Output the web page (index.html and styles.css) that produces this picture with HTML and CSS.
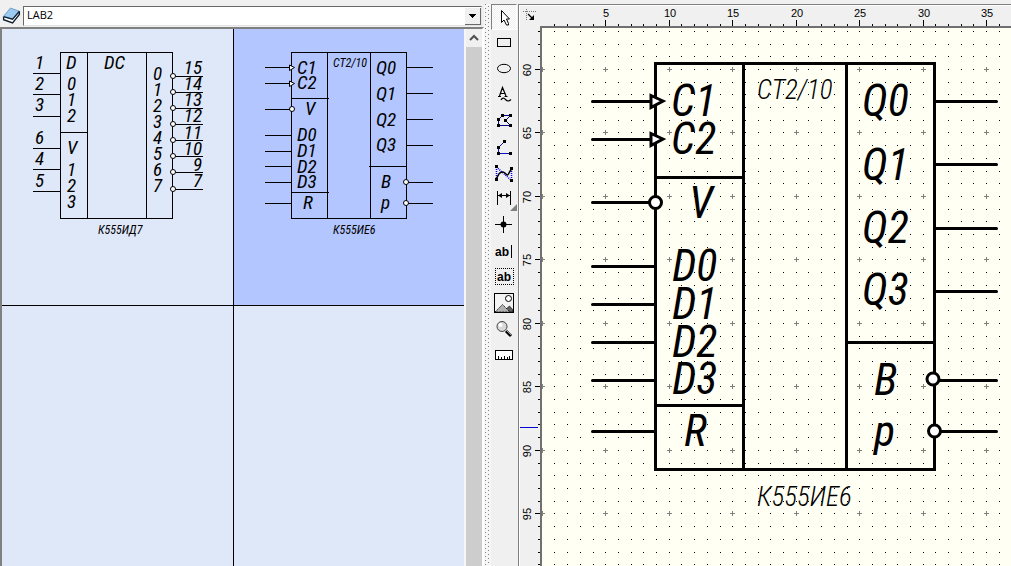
FILE: index.html
```html
<!DOCTYPE html>
<html lang="ru">
<head>
<meta charset="utf-8">
<title>LAB2</title>
<link rel="stylesheet" href="styles.css">
</head>
<body>
<div class="app">
  <div class="dock-edge"></div>
  <div class="workspace">
    <aside class="library">
      <div class="library-bar">
        <svg class="book" viewBox="0 0 18 18" aria-hidden="true">
          <path d="M1 10L8 2L16 5V8L10 16L2 13Z" fill="#fff" stroke="#8f9fae" stroke-width=".6"/>
          <path d="M1.500 10L8 2L16.500 5L10 12.500Z" fill="#9ccaf2" stroke="#6f9fc8" stroke-width=".8"/>
          <path d="M1.500 10L10 12.500L16.500 5M1.500 10.500V13L10 16L16.500 8V5" fill="none" stroke="#10202e" stroke-width="1.200"/>
        </svg>
        <select class="library-select" aria-label="Библиотека"><option>LAB2</option></select>
      </div>
      <div class="catalog">
        <div class="cells">
          <div class="cell">
            <svg class="part" viewBox="2 29 231 276" role="img" aria-label="К555ИД7">
              <path class="thin" d="M60.500 52.500H172.500V218.500H60.500ZM87.500 52V218M146.500 52V218M60 132.500H87M33 73.500H60M33 94.500H60M33 116.500H60M33 148.500H60M33 169.500H60M33 191.500H60M173 76.500H203M173 92.500H203M173 108.500H203M173 124.500H203M173 140.500H203M173 156.500H203M173 172.500H203M173 189.500H203"/>
              <g class="pin-thin"><circle cx="173" cy="76" r="2.500"/><circle cx="173" cy="92" r="2.500"/><circle cx="173" cy="108" r="2.500"/><circle cx="173" cy="124" r="2.500"/><circle cx="173" cy="140" r="2.500"/><circle cx="173" cy="156" r="2.500"/><circle cx="173" cy="172" r="2.500"/><circle cx="173" cy="189" r="2.500"/></g>
              <g class="label">
                <text x="35" y="69">1</text><text x="35" y="90">2</text><text x="35" y="111">3</text><text x="35" y="144">6</text><text x="35" y="165">4</text><text x="35" y="187">5</text>
                <text x="66" y="69">D</text><text x="67" y="90">0</text><text x="67" y="106">1</text><text x="67" y="122">2</text><text x="67" y="154">V</text><text x="67" y="176">1</text><text x="67" y="192">2</text><text x="67" y="208">3</text>
                <text x="104" y="69">DC</text>
                <text x="153" y="80">0</text><text x="153" y="96">1</text><text x="153" y="112">2</text><text x="153" y="128">3</text><text x="153" y="144">4</text><text x="153" y="160">5</text><text x="153" y="176">6</text><text x="153" y="192">7</text>
                <g text-anchor="end"><text x="202" y="74">15</text><text x="202" y="90">14</text><text x="202" y="106">13</text><text x="202" y="122">12</text><text x="202" y="139">11</text><text x="202" y="155">10</text><text x="202" y="171">9</text><text x="202" y="187">7</text></g>
              </g>
              <text class="caption" x="98" y="234">К555ИД7</text>
            </svg>
          </div>
          <div class="cell selected">
            <svg class="part" viewBox="234 29 231 276" role="img" aria-label="К555ИЕ6">
              <path class="thin" d="M291.500 52.500H406.500V218.500H291.500ZM327.500 52V218M370.500 52V218M291 98.500H329M291 192.500H329M369 166.500H406M265 67.500H291M265 83.500H291M265 109.500H291M265 135.500H291M265 151.500H291M265 166.500H291M265 182.500H291M265 203.500H291M407 67.500H433M407 93.500H433M407 119.500H433M407 145.500H433M407 182.500H433M407 203.500H433"/>
              <g class="pin-thin"><path d="M289.500 65L294.500 67.500L289.500 70.500ZM289.500 81L294.500 83.500L289.500 86.500Z"/><circle cx="292" cy="109" r="2.500"/><circle cx="406" cy="182" r="2.500"/><circle cx="406" cy="203" r="2.500"/></g>
              <g class="label">
                <text x="297" y="74">C1</text><text x="297" y="89">C2</text><text x="305" y="115">V</text><text x="297" y="141">D0</text><text x="297" y="157">D1</text><text x="297" y="173">D2</text><text x="297" y="188">D3</text><text x="303" y="209">R</text>
                <text x="376" y="74">Q0</text><text x="376" y="100">Q1</text><text x="376" y="126">Q2</text><text x="376" y="151">Q3</text><text x="381" y="188">B</text><text x="381" y="209">p</text>
              </g>
              <text class="caption" x="333" y="67">CT2/10</text>
              <text class="caption" x="333" y="234">К555ИЕ6</text>
            </svg>
          </div>
          <div class="cell"></div>
          <div class="cell"></div>
        </div>
        <div class="scrollbar">
          <button class="scroll-up" aria-label="Вверх"><svg viewBox="0 0 16 18"><path d="M4 11l4-4 4 4" fill="none" stroke="#505050" stroke-width="2"/></svg></button>
          <div class="thumb"></div>
        </div>
      </div>
    </aside>
    <div class="splitter"></div>
    <nav class="tools">
      <button class="tool active" aria-label="Выделение"><svg viewBox="0 0 26 26"><path d="M10.500 6.500V18.500L13 16L15.500 21H17.500V19.500L15.500 15H18.500Z" fill="#fff" stroke="#000"/></svg></button>
      <button class="tool" aria-label="Прямоугольник"><svg viewBox="0 0 26 26"><rect x="6.500" y="8.500" width="13" height="8" fill="none" stroke="#000"/></svg></button>
      <button class="tool" aria-label="Эллипс"><svg viewBox="0 0 26 26"><ellipse cx="13" cy="12.500" rx="6.500" ry="4.200" fill="none" stroke="#000"/></svg></button>
      <button class="tool" aria-label="Текст"><svg viewBox="0 0 26 26"><path d="M7 14.500h3M13.500 14.500h3M8.500 14l3-8.500 3.500 8.500M10 11.500h4M10 18q2-3.500 4.500-.5t5.500 0" fill="none" stroke="#000" stroke-width="1.200"/></svg></button>
      <button class="tool" aria-label="Многоугольник"><svg viewBox="0 0 26 26"><path d="M11.500 7.500H19.500L14.500 12.500L19.500 17.500H7.500V11.500Z" fill="none" stroke="#00008b"/><path d="M10 6h3v3h-3zM18 6h3v3h-3zM13 11h3v3h-3zM18 16h3v3h-3zM6 16h3v3H6zM6 10h3v3H6z"/></svg></button>
      <button class="tool" aria-label="Ломаная"><svg viewBox="0 0 26 26"><path d="M13.500 7.500L7.500 13.500V19.500H19.500" fill="none" stroke="#1010c0"/><path d="M12 6h3v3h-3zM6 12h3v3H6zM6 18h3v3H6zM18 18h3v3h-3z"/></svg></button>
      <button class="tool" aria-label="Кривая"><svg viewBox="0 0 26 26"><path d="M5.500 7V19M20.500 9V20M5.500 7L20.500 20.500" fill="none" stroke="#0000ff" stroke-width="1.500" stroke-dasharray="1 1"/><path d="M5.500 19.500C7 14 9 11.500 12 12S16 17 17.500 14S19 11 20.500 9" fill="none" stroke="#000" stroke-width="1.500"/><path d="M4 5h3v3H4zM19 7h3v3h-3zM19 19h3v3h-3zM4 18h3v3H4z"/></svg></button>
      <button class="tool" aria-label="Размер"><svg viewBox="0 0 26 26"><path d="M6.500 5V19M19.500 5V19M7 9.500H19" fill="none" stroke="#000"/><path d="M7 9.500l4-2.500v5zM19 9.500l-4-2.500v5z"/><path d="M26 18v7h-7z" fill="#808080"/></svg></button>
      <button class="tool" aria-label="Узел"><svg viewBox="0 0 26 26"><path d="M4 12.500H21M12.500 4V21" stroke="#000"/><circle cx="12.500" cy="12.500" r="3"/></svg></button>
      <button class="tool" aria-label="Строка"><svg viewBox="0 0 26 26"><text class="ab" x="4" y="18">ab</text><path d="M20.500 7V20" stroke="#000"/></svg></button>
      <button class="tool" aria-label="Надпись"><svg viewBox="0 0 26 26"><path d="M4 4.500H23M4 20.500H23M4.500 4V21M22.500 4V21" fill="none" stroke="#000" stroke-dasharray="1 1"/><text class="ab" x="6" y="17">ab</text></svg></button>
      <button class="tool" aria-label="Рисунок"><svg viewBox="0 0 26 26"><rect x="3.500" y="3.500" width="19" height="19" fill="#f4f4f4" stroke="#000"/><circle cx="17.500" cy="8.500" r="3" fill="#fff" stroke="#000"/><path d="M15 19l3.500-3 3.500 4v2h-5z" fill="#606060" stroke="#000" stroke-width=".6"/><path d="M4 22l7.500-7.500 7.500 7.500z" fill="#b0b0b0" stroke="#000" stroke-width=".8" stroke-dasharray="2 1"/></svg></button>
      <button class="tool" aria-label="Масштаб"><svg viewBox="0 0 26 26"><path d="M15 15l5 5" stroke="#000" stroke-width="3"/><circle cx="11" cy="10.500" r="5" fill="#d8d8d8" stroke="#404040"/><circle cx="9.500" cy="9" r="2" fill="#fff"/><path d="M15 14l5 5" stroke="#999"/></svg></button>
      <button class="tool" aria-label="Линейка"><svg viewBox="0 0 26 26"><rect x="4.500" y="8.500" width="17" height="9" fill="#fff" stroke="#000"/><path d="M7.500 14v3M10.500 15v2M13.500 14v3M16.500 15v2M18.500 14v3" stroke="#000"/></svg></button>
    </nav>
    <main class="editor">
      <div class="corner"><svg viewBox="0 0 20 20" aria-hidden="true"><path d="M3 5.500H17M6.500 3V15" stroke="#777" stroke-dasharray="1 1"/><path d="M8 8l5 5" stroke="#000" stroke-width="1.300"/><path d="M14 9v5H9z"/></svg></div>
      <svg class="ruler ruler-x" id="rulerX"></svg>
      <svg class="ruler ruler-y" id="rulerY"></svg>
      <div class="sheet">
        <svg class="layer" id="grid" aria-hidden="true"></svg>
        <svg class="layer" role="img" aria-label="К555ИЕ6">
          <g transform="translate(-542 -28)">
            <path class="bold" d="M655.500 63.500H934.500V469.500H655.500ZM743.500 63V469M846.500 63V469M655 177.500H743M655 405.500H743M846 342.500H934"/>
            <path class="bold wire" d="M592.500 101.500H655M592.500 139.500H655M592.500 202.500H655M592.500 266.500H655M592.500 304.500H655M592.500 342.500H655M592.500 380.500H655M592.500 431.500H655M935 101.500H996.500M935 164.500H996.500M935 228.500H996.500M935 291.500H996.500M935 380.500H996.500M935 431.500H996.500"/>
            <g class="pin-bold"><path d="M651 95.500L663 101L651 107.500ZM651 133.500L663 139L651 145.500Z"/><circle cx="655.500" cy="202.500" r="6"/><circle cx="933" cy="379" r="6"/><circle cx="934.500" cy="431" r="6"/></g>
            <g class="label-big">
              <text x="671" y="116">C1</text><text x="671" y="154">C2</text><text x="689" y="218">V</text><text x="672" y="281">D0</text><text x="672" y="319">D1</text><text x="672" y="357">D2</text><text x="672" y="394">D3</text><text x="684" y="446">R</text>
              <text x="862" y="116">Q0</text><text x="862" y="180">Q1</text><text x="862" y="243">Q2</text><text x="862" y="305">Q3</text><text x="874" y="395">B</text><text x="874" y="446">p</text>
            </g>
            <text class="label-mid" x="757" y="99">CT2/10</text>
            <text class="label-mid" x="757" y="506">К555ИЕ6</text>
          </g>
        </svg>
      </div>
    </main>
  </div>
</div>
<script src="grid.js"></script>
</body>
</html>
```
FILE: styles.css
```css
* { box-sizing: border-box; }
body { margin: 0; background: #f0f0f0; font: 11px/16px "Liberation Sans", sans-serif; color: #000; }
button { border: 0; padding: 0; background: transparent; }
svg { display: block; }
.app { display: flex; flex-direction: column; height: 100vh; overflow: hidden; }
.dock-edge { flex: none; height: 4px; }
.workspace { flex: 1; display: flex; min-height: 0; }

.library { flex: 0 1 484px; min-width: 0; display: flex; flex-direction: column; }
.library-bar { display: flex; align-items: center; height: 23px; padding: 0 2px; gap: 2px; }
.book { width: 19px; height: 19px; flex: none; }
.library-select {
  flex: 1; height: 20px; padding: 0 20px 2px 3px; appearance: none; border-radius: 0;
  border: 1px solid #e3e3e3; border-top-color: #696969; border-left-color: #696969;
  font: 11px/16px "Open Sans", sans-serif; color: #000;
  background:
    linear-gradient(#000, #000) right 5px top 7px / 7px 1px no-repeat,
    linear-gradient(#000, #000) right 6px top 8px / 5px 1px no-repeat,
    linear-gradient(#000, #000) right 7px top 9px / 3px 1px no-repeat,
    linear-gradient(#000, #000) right 8px top 10px / 1px 1px no-repeat,
    linear-gradient(#f0f0f0, #f0f0f0) right 1px top 1px / 15px 16px no-repeat,
    linear-gradient(#696969, #696969) right 0 bottom 0 / 16px 17px no-repeat,
    #fff;
}
.catalog { flex: 1; min-height: 0; display: flex; border: solid #808080; border-width: 2px 2px 0 2px; border-right-color: #fff; }
.cells {
  flex: 1; display: grid; grid-template-columns: 1fr 1fr; grid-template-rows: 276px 1fr;
  gap: 1px; background: #000;
}
.cell { background: #dfe8f9; min-width: 0; overflow: hidden; }
.selected { background: #b3c6ff; }
.part { width: 231px; height: 276px; }
.scrollbar { width: 18px; border-left: 2px solid #f6f6f6; background: #f0f0f0; display: flex; flex-direction: column; }
.scroll-up { height: 18px; flex: none; }
.thumb { flex: 1; background: #cdcdcd; }

.splitter {
  flex: none; width: 7px;
  background:
    conic-gradient(from 270deg at 1px 1px, #808080 25%, transparent 0) 1px 0 / 6px 4px,
    conic-gradient(from 270deg at 1px 1px, #808080 25%, transparent 0) 4px 2px / 6px 4px,
    #f6f6f6;
}
.tools { flex: none; width: 27px; }
.tool { display: block; width: 26px; height: 26px; }
.tool svg { width: 26px; height: 26px; }
.active {
  border: 1px solid #fff; border-top-color: #808080; border-left-color: #808080;
  background: repeating-conic-gradient(#fff 0 25%, #f0f0f0 0 50%) 0 0 / 2px 2px;
}
.active svg { margin: -1px; }
.ab { font: bold 12px "Liberation Sans", sans-serif; }

.editor {
  flex: 1; min-width: 0; display: grid; grid-template: 21px 1fr / 21px 1fr;
  border: solid #808080; border-width: 1px 0 0 1px;
}
.corner, .ruler { background: #f0f0f0; }
.corner svg { width: 20px; height: 20px; }
.corner, .ruler-x { border-top: 1px solid #fff; }
.corner, .ruler-y { border-left: 1px solid #fff; }
.ruler { width: 100%; height: 100%; min-width: 0; overflow: hidden; shape-rendering: crispEdges; }
.ruler text { font: 11px "Liberation Sans", sans-serif; text-anchor: middle; }
.sheet { display: grid; min-width: 0; min-height: 0; border: solid #707070; border-width: 2px 0 0 2px; background: #fffff3; overflow: hidden; }
.layer { grid-area: 1 / 1; width: 100%; height: 100%; min-width: 0; min-height: 0; }
#grid { shape-rendering: crispEdges; }

.thin { fill: none; stroke: #000; shape-rendering: crispEdges; }
.pin-thin { fill: #fff; stroke: #000; stroke-width: 1px; }
.bold { fill: none; stroke: #000; stroke-width: 3px; }
.wire { stroke-linecap: round; }
.pin-bold { fill: #fff; stroke: #000; stroke-width: 3px; }
.label, .label-big, .label-mid, .caption { font-family: "Roboto Condensed", "Roboto", sans-serif; font-style: italic; font-weight: 300; }
.label { font-size: 19px; font-weight: 400; }
.label-big { font-size: 44px; font-weight: 400; }
.label-mid { font-size: 27px; }
.caption { font-size: 12px; font-weight: 400; }
```
FILE: grid.js
```js
const NS = "http://www.w3.org/2000/svg";
const STEP = 12.7;
const px = n => Math.round(63.2 + STEP * (n - 5));
const py = n => Math.round(40.9 + STEP * (n - 60));

function path(svg, d, fill) {
  const p = document.createElementNS(NS, "path");
  p.setAttribute("d", d);
  p.setAttribute("fill", fill);
  svg.append(p);
}
function label(svg, x, y, value, transform) {
  const t = document.createElementNS(NS, "text");
  t.setAttribute("x", x);
  t.setAttribute("y", y);
  if (transform) t.setAttribute("transform", transform);
  t.textContent = value;
  svg.append(t);
}
function draw() {
  const grid = document.getElementById("grid");
  const rx = document.getElementById("rulerX");
  const ry = document.getElementById("rulerY");
  [grid, rx, ry].forEach(s => s.replaceChildren());
  const w = grid.clientWidth, h = grid.clientHeight;
  let dots = "", marks = "", tx = "", ty = "";
  for (let n = 0; px(n) < w; n++) {
    for (let m = 57; py(m) < h; m++) {
      const x = px(n), y = py(m);
      if (n % 5 || m % 5) { if (n) dots += `M${x} ${y}h1v1h-1z`; }
      else marks += `M${x - 2} ${y}h5v1h-5zM${x} ${y - 2}h1v5h-1z`;
    }
    const major = n % 5 === 0;
    if (n) tx += `M${px(n) + 2} ${major ? 14 : 18}h1V20h-1z`;
    if (major && n) label(rx, px(n) + 3, 11, n);
  }
  for (let m = 57; py(m) < h; m++) {
    const major = m % 5 === 0;
    ty += `M${major ? 15 : 18} ${py(m) + 2}H20v1H${major ? 15 : 18}z`;
    if (major) label(ry, 0, 0, m, `translate(11 ${py(m) + 3}) rotate(-90)`);
  }
  path(grid, dots, "#000");
  path(grid, marks, "#808080");
  path(rx, tx, "#000");
  path(ry, ty, "#000");
  path(ry, "M0 401h18v1h-18z", "#0000d0");
}
draw();
addEventListener("resize", draw);
```
